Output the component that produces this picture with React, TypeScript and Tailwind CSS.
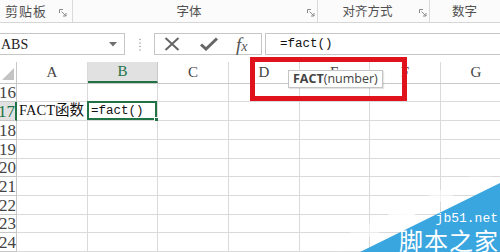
import React from 'react'

const serif = { fontFamily: '"Liberation Serif", "Noto Sans CJK SC", serif' }
const mono = { fontFamily: '"Liberation Mono", "DejaVu Sans Mono", monospace' }
const cjk = { fontFamily: '"Noto Sans CJK SC", "Noto Sans", sans-serif' }

const columns = [
  { label: 'A', w: 71 },
  { label: 'B', w: 70 },
  { label: 'C', w: 71 },
  { label: 'D', w: 71 },
  { label: 'E', w: 70 },
  { label: 'F', w: 71 },
  { label: 'G', w: 71 },
]

const rows = [
  { n: 16, h: 18 },
  { n: 17, h: 19 },
  { n: 18, h: 19 },
  { n: 19, h: 19 },
  { n: 20, h: 18 },
  { n: 21, h: 19 },
  { n: 22, h: 19 },
  { n: 23, h: 18 },
  { n: 24, h: 19 },
]

function Launcher() {
  return (
    <svg width="8" height="8" viewBox="0 0 8 8" className="mt-1">
      <path d="M0.5 0.5 H4 M0.5 0.5 V4" stroke="#8a8a8a" fill="none" />
      <path d="M2.5 2.5 L7 7 M7 4 V7 H4" stroke="#8a8a8a" fill="none" />
    </svg>
  )
}

function RibbonGroup({ label, width, launcher }: { label: string; width: number; launcher: boolean }) {
  return (
    <div className="flex items-center h-full border-r border-[#dadada] shrink-0" style={{ width }}>
      <div className="flex-1 text-center text-[12.5px] text-[#505050]" style={cjk}>
        {label}
      </div>
      {launcher && <div className="w-[12px] flex justify-center">{<Launcher />}</div>}
    </div>
  )
}

function Ribbon() {
  return (
    <div className="h-[23px] flex items-center bg-[#fbfbfb] border-b border-[#d6d6d6]">
      <div className="flex items-center h-full w-[73px] border-r border-[#dadada] shrink-0">
        <div className="pl-[5px] text-[13px] tracking-[1px] text-[#505050]" style={cjk}>剪贴板</div>
        <div className="ml-[12px]"><Launcher /></div>
      </div>
      <RibbonGroup label="字体" width={245} launcher />
      <RibbonGroup label="对齐方式" width={112} launcher />
      <div className="flex-1 pl-[22px] text-[12.5px] text-[#505050]" style={cjk}>数字</div>
    </div>
  )
}

function FormulaBar() {
  return (
    <div className="h-[22px] flex items-stretch">
      <div className="w-[125px] shrink-0 flex items-center justify-between border border-l-0 border-[#c6c6c6] bg-white">
        <span className="text-[14px] text-[#222] pl-[1px]" style={serif}>ABS</span>
        <svg width="8" height="5" viewBox="0 0 8 5" className="mr-[7px]">
          <path d="M0 0 H8 L4 4.5 Z" fill="#707070" />
        </svg>
      </div>
      <div className="w-[29px] shrink-0 flex items-center justify-center">
        <svg width="2" height="13" viewBox="0 0 2 13">
          <circle cx="1" cy="1.5" r="0.8" fill="#a0a0a0" />
          <circle cx="1" cy="5" r="0.8" fill="#a0a0a0" />
          <circle cx="1" cy="8.5" r="0.8" fill="#a0a0a0" />
          <circle cx="1" cy="12" r="0.8" fill="#a0a0a0" />
        </svg>
      </div>
      <div className="w-[108px] shrink-0 flex items-center border border-[#c6c6c6] bg-white">
        <svg width="16" height="14" viewBox="0 0 16 14" className="ml-[9px]">
          <path d="M1.5 1 L14.5 13 M14.5 1 L1.5 13" stroke="#666" strokeWidth="2" />
        </svg>
        <svg width="18" height="14" viewBox="0 0 18 14" className="ml-[20px]">
          <path d="M1 7.5 L6 12 L17 1.5" stroke="#666" strokeWidth="3" fill="none" />
        </svg>
        <span className="ml-[18px] text-[19px] italic text-[#555] leading-none" style={serif}>
          f<span className="text-[14px]">x</span>
        </span>
      </div>
      <div className="w-[3px] shrink-0" />
      <div className="flex-1 flex items-center border border-r-0 border-[#c6c6c6] bg-white">
        <span className="pl-[14px] text-[12.5px] text-[#111]" style={mono}>=fact()</span>
      </div>
    </div>
  )
}

function ColumnHeaders() {
  return (
    <div className="flex h-[22px] border-b border-[#c8c8c8] bg-white">
      <div className="w-[17px] shrink-0 relative border-r border-[#c8c8c8]">
        <svg width="12" height="12" viewBox="0 0 12 12" className="absolute right-[2px] bottom-[3px]">
          <path d="M12 0 V12 H0 Z" fill="#c4c4c4" />
        </svg>
      </div>
      {columns.map((c) =>
        c.label === 'B' ? (
          <div
            key={c.label}
            className="shrink-0 flex items-center justify-center bg-[#e1e1e1] border-r border-[#c8c8c8] border-b-2 border-b-[#217346] text-[#217346] text-[15px]"
            style={{ width: c.w, ...serif }}
          >
            {c.label}
          </div>
        ) : (
          <div
            key={c.label}
            className="shrink-0 flex items-center justify-center border-r border-[#dadada] text-[#444] text-[15px]"
            style={{ width: c.w, ...serif }}
          >
            {c.label}
          </div>
        ),
      )}
    </div>
  )
}

function SheetRow({ n, h }: { n: number; h: number }) {
  const active = n === 17
  return (
    <div className="flex" style={{ height: h }}>
      <div
        className={`w-[17px] shrink-0 overflow-hidden flex items-center justify-end border-r border-b border-[#c8c8c8] text-[17px] leading-none ${
          active ? 'bg-[#e1e1e1] text-[#217346] border-r-2 border-r-[#217346]' : 'bg-white text-[#444]'
        }`}
        style={serif}
      >
        <span className="whitespace-nowrap shrink-0">{n}</span>
      </div>
      {columns.map((c) => (
        <div
          key={c.label}
          className="shrink-0 relative border-r border-b border-[#dadada] bg-white flex items-center"
          style={{ width: c.w }}
        >
          {active && c.label === 'A' && (
            <span className="pl-[2px] text-[14.5px] text-[#111] whitespace-nowrap" style={serif}>
              FACT函数
            </span>
          )}
          {active && c.label === 'B' && (
            <>
              <span className="pl-[3px] text-[12.5px] text-[#111]" style={mono}>=fact()</span>
              <div className="absolute -left-[1px] -top-[1px] right-0 bottom-0 border-2 border-[#217346]" />
              <div className="absolute -right-[3px] -bottom-[3px] w-[6px] h-[6px] bg-[#217346] border border-white" />
            </>
          )}
        </div>
      ))}
    </div>
  )
}

function Watermark() {
  return (
    <div className="absolute right-0 bottom-0 w-[160px] h-[80px] pointer-events-none">
      <svg width="160" height="80" viewBox="0 0 160 80" className="absolute inset-0">
        <defs>
          <linearGradient id="fade" x1="0" y1="1" x2="1" y2="0">
            <stop offset="0" stopColor="#ffffff" stopOpacity="0" />
            <stop offset="0.45" stopColor="#ffffff" stopOpacity="0.9" />
            <stop offset="1" stopColor="#ffffff" stopOpacity="0" />
          </linearGradient>
        </defs>
        <polygon points="0,80 160,0 160,-10 -10,70" fill="url(#fade)" />
        <polygon points="20,80 160,11 160,80" fill="#3aa6e0" />
      </svg>
      <div className="absolute right-[2px] bottom-[27px] text-[13px] text-white leading-none" style={mono}>
        jb51.net
      </div>
      <div className="absolute right-[1px] bottom-0 h-[24px] text-[24px] text-white leading-none tracking-[1px]" style={cjk}>
        脚本之家
      </div>
    </div>
  )
}

export default function App() {
  return (
    <div className="relative w-[500px] h-[252px] overflow-hidden bg-white">
      <Ribbon />
      <div className="h-[10px]" />
      <FormulaBar />
      <div className="h-[7px]" />
      <div className="overflow-hidden">
        <ColumnHeaders />
        {rows.map((r) => (
          <SheetRow key={r.n} n={r.n} h={r.h} />
        ))}
      </div>

      {/* highlight box and tooltip */}
      <div className="absolute left-[250px] top-[57px] w-[157px] h-[44px] border-[5px] border-[#e0131d]" />
      <div
        className="absolute left-[288px] top-[70px] w-[95px] h-[18px] bg-white border border-[#c4c4c4] shadow-[1px_1px_1px_rgba(0,0,0,0.1)] flex items-center pl-[4px] text-[12.5px] text-[#444]"
        style={{ fontFamily: '"Open Sans", "Noto Sans", sans-serif' }}
      >
        <span className="font-bold">FACT</span>
        <span>(number)</span>
      </div>

      <Watermark />
    </div>
  )
}
